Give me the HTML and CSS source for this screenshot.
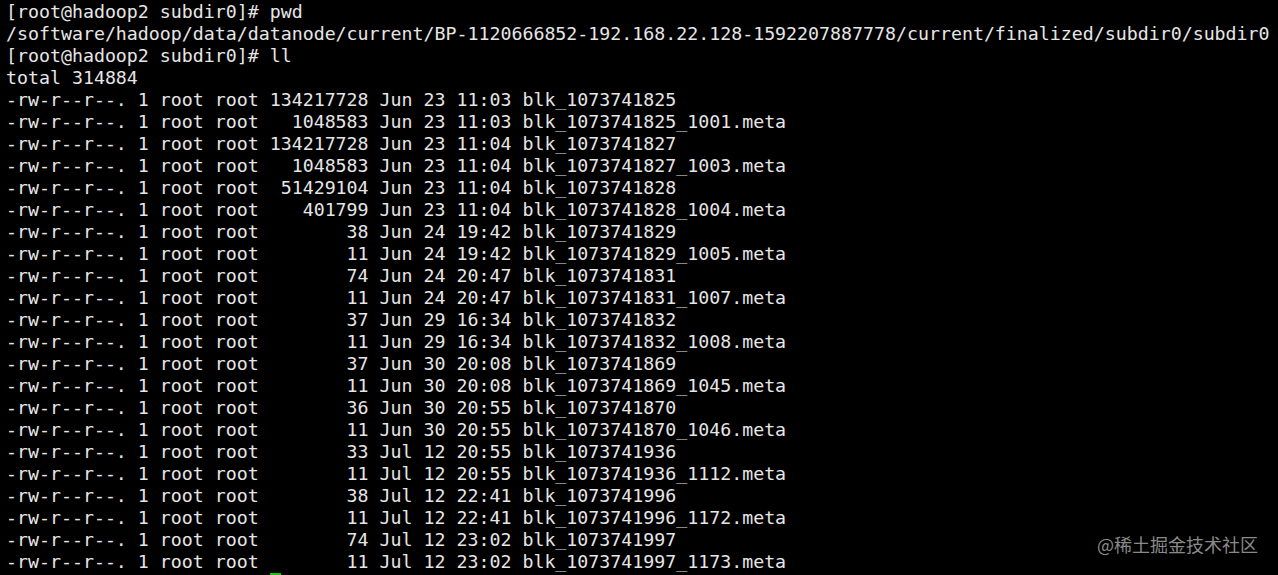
FILE: index.html
```html
<!DOCTYPE html>
<html>
<head>
<meta charset="utf-8">
<link rel="stylesheet" href="styles.css">
</head>
<body>
<div class="terminal">
<pre class="output">[root@hadoop2 subdir0]# pwd
/software/hadoop/data/datanode/current/BP-1120666852-192.168.22.128-1592207887778/current/finalized/subdir0/subdir0
[root@hadoop2 subdir0]# ll
total 314884
-rw-r--r--. 1 root root 134217728 Jun 23 11:03 blk_1073741825
-rw-r--r--. 1 root root   1048583 Jun 23 11:03 blk_1073741825_1001.meta
-rw-r--r--. 1 root root 134217728 Jun 23 11:04 blk_1073741827
-rw-r--r--. 1 root root   1048583 Jun 23 11:04 blk_1073741827_1003.meta
-rw-r--r--. 1 root root  51429104 Jun 23 11:04 blk_1073741828
-rw-r--r--. 1 root root    401799 Jun 23 11:04 blk_1073741828_1004.meta
-rw-r--r--. 1 root root        38 Jun 24 19:42 blk_1073741829
-rw-r--r--. 1 root root        11 Jun 24 19:42 blk_1073741829_1005.meta
-rw-r--r--. 1 root root        74 Jun 24 20:47 blk_1073741831
-rw-r--r--. 1 root root        11 Jun 24 20:47 blk_1073741831_1007.meta
-rw-r--r--. 1 root root        37 Jun 29 16:34 blk_1073741832
-rw-r--r--. 1 root root        11 Jun 29 16:34 blk_1073741832_1008.meta
-rw-r--r--. 1 root root        37 Jun 30 20:08 blk_1073741869
-rw-r--r--. 1 root root        11 Jun 30 20:08 blk_1073741869_1045.meta
-rw-r--r--. 1 root root        36 Jun 30 20:55 blk_1073741870
-rw-r--r--. 1 root root        11 Jun 30 20:55 blk_1073741870_1046.meta
-rw-r--r--. 1 root root        33 Jul 12 20:55 blk_1073741936
-rw-r--r--. 1 root root        11 Jul 12 20:55 blk_1073741936_1112.meta
-rw-r--r--. 1 root root        38 Jul 12 22:41 blk_1073741996
-rw-r--r--. 1 root root        11 Jul 12 22:41 blk_1073741996_1172.meta
-rw-r--r--. 1 root root        74 Jul 12 23:02 blk_1073741997
-rw-r--r--. 1 root root        11 Jul 12 23:02 blk_1073741997_1173.meta
                        <span class="cursor"> </span></pre>
<div class="watermark">@稀土掘金技术社区</div>
</div>
</body>
</html>
```
FILE: styles.css
```css
html, body {
  margin: 0;
  padding: 0;
  background: #000;
}
.terminal {
  position: relative;
  width: 1278px;
  height: 575px;
  overflow: hidden;
  background: #000;
}
.output {
  margin: 0;
  padding: 1px 0 0 6px;
  font-family: "DejaVu Sans Mono", monospace;
  font-size: 18.25px;
  line-height: 22px;
  color: #e6e6e6;
  white-space: pre;
}
.cursor {
  display: inline-block;
  width: 11px;
  height: 22px;
  vertical-align: top;
  background: #16c60c;
}
.watermark {
  position: absolute;
  right: 20px;
  bottom: 20px;
  font-family: "Noto Sans CJK SC", "Noto Sans", sans-serif;
  font-size: 18px;
  line-height: 22px;
  color: #8a8a8a;
}
```
